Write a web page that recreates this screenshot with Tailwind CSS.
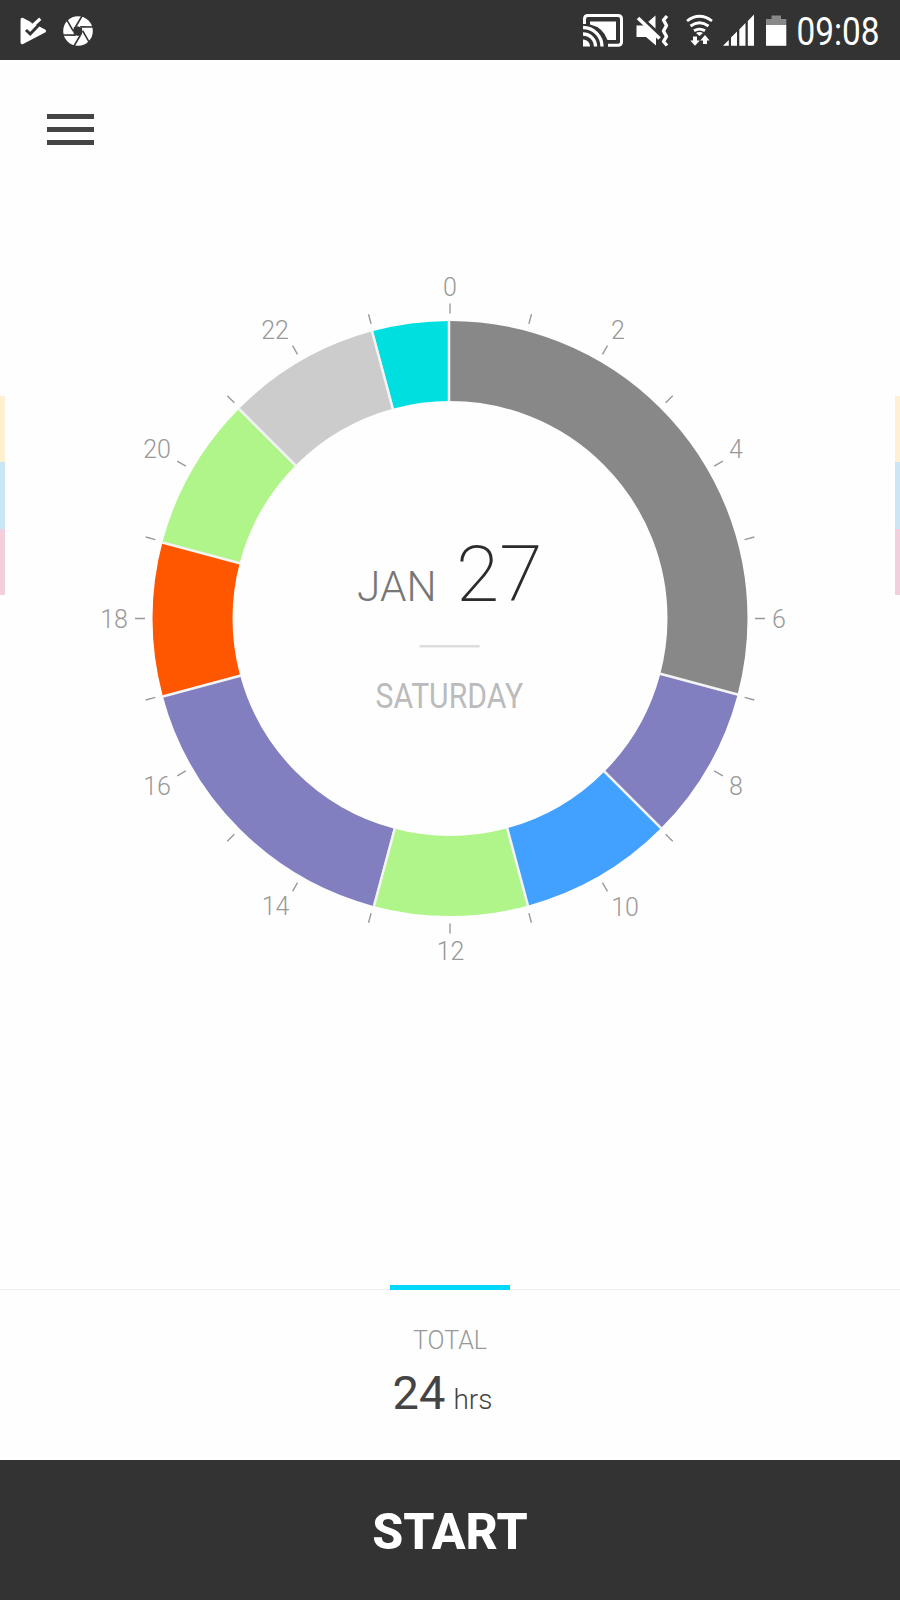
<!DOCTYPE html>
<html lang="en">
<head>
  <meta charset="UTF-8">
  <meta name="viewport" content="width=device-width, initial-scale=1.0">
  <title>Day Clock</title>
  <script src="https://cdn.jsdelivr.net/npm/@tailwindcss/browser@4"></script>
</head>
<body class="bg-[#fefefe] font-[Roboto,sans-serif]">
  <div class="w-[900px] h-[1600px] flex flex-col overflow-hidden">
    <!-- status bar -->
    <header class="h-[60px] shrink-0 bg-[#333333] text-white flex items-center justify-between pl-[19px] pr-[17px]">
      <div class="flex items-center gap-4 pt-px">
        <svg class="w-7 h-[30px]" viewBox="0 0 28 30">
          <path d="M3.300 3.500L25.300 15L3.300 26.500Z" fill="white" stroke="white" stroke-width="3.500" stroke-linejoin="round"/>
          <path d="M11 6L14.500 8.500L20.500 2L28 6V13L20 8.500Z" fill="#333333"/>
          <path d="M7 14L11.200 18L20 8.800" fill="none" stroke="#333333" stroke-width="3"/>
          <path d="M12.500 10.800L21.300 2.800" fill="none" stroke="white" stroke-width="3.200"/>
        </svg>
        <svg class="w-[30px] h-[30px]" viewBox="-15 -15 30 30">
          <circle r="14.800" fill="white"/>
          <path d="M-4 -4L0 -4.800L4 -3L4.500 1L3.500 4L0 5L-4 3.500L-5 0Z" fill="#333333"/>
          <g stroke="#333333" stroke-width="1.600">
            <path d="M-2.500 -4L4 -15"/>
            <path d="M-2.500 -4L4 -15" transform="rotate(60)"/>
            <path d="M-2.500 -4L4 -15" transform="rotate(120)"/>
            <path d="M-2.500 -4L4 -15" transform="rotate(180)"/>
            <path d="M-2.500 -4L4 -15" transform="rotate(240)"/>
            <path d="M-2.500 -4L4 -15" transform="rotate(300)"/>
          </g>
        </svg>
      </div>
      <div class="flex items-center">
        <svg class="w-[210px] h-[60px]" viewBox="580 0 210 60" fill="none">
          <!-- cast -->
          <path d="M584.500 24V19Q584.500 15.500 588 15.500H618Q621.500 15.500 621.500 19V42Q621.500 45.300 618 45.300H608" stroke="white" stroke-width="3"/>
          <path d="M590 21.500H616V40H607.500A24 24 0 0 0 590 24.500Z" fill="white"/>
          <path d="M583 27.500A19 19 0 0 1 602 46.500M583 34A12.500 12.500 0 0 1 595.500 46.500" stroke="white" stroke-width="3.300"/>
          <path d="M583 39.500A7 7 0 0 1 590 46.500H583Z" fill="white"/>
          <!-- muted, vibrating -->
          <path d="M636.500 25.500H645L656 35V45.500L646 37H636.500Z" fill="white"/>
          <path d="M648 22L655.500 15.500V29Z" fill="white"/>
          <path d="M639.500 15.800L662 36.500" stroke="#333333" stroke-width="3"/>
          <path d="M638 18L659.500 38.500" stroke="white" stroke-width="3.600"/>
          <path d="M667 16L663.500 20L666.500 25.500L663.500 31L666.500 36.500L663.500 41.500L667 45.500" stroke="white" stroke-width="3.400" stroke-linejoin="round"/>
          <!-- wifi with traffic arrows -->
          <path d="M687 21Q699.500 11.500 712 21M690.500 26Q699.500 19.500 708.500 26M694 30.800Q699.500 27.300 705 30.800" stroke="white" stroke-width="2.800"/>
          <path d="M696 33L699.500 36L703 33Q699.500 30.800 696 33Z" fill="white"/>
          <path d="M693 36.500H697V40.500H699.800L695 45.800L690.300 40.500H693ZM703 44V40.500H700.300L705 35L709.500 40.500H707V44Z" fill="white"/>
          <!-- signal -->
          <path d="M723 45.800L728.800 40V45.800ZM731 45.800V37.500L737 31.500V45.800ZM739.300 45.800V29.500L745.500 23V45.800ZM747.800 45.800V21L754 14.500V45.800Z" fill="white"/>
          <!-- battery -->
          <path d="M766 25V19H771.500V15.500H781V19H786.300V25Z" fill="#888888"/>
          <path d="M766 25H786.300V45.800H766Z" fill="white"/>
        </svg>
        <svg class="w-[93px] h-[60px] overflow-visible" viewBox="790 0 93 60">
          <text x="796.500" y="45.200" textLength="83" lengthAdjust="spacingAndGlyphs" fill="white" class="text-[38px]">09:08</text>
        </svg>
      </div>
    </header>

    <main class="relative flex-1 flex flex-col">
      <button class="w-[47px] h-[31px] mt-[54px] ml-[46.5px] flex flex-col justify-between">
        <span class="block w-full h-[5px] bg-[#444444]"></span>
        <span class="block w-full h-[5px] bg-[#444444]"></span>
        <span class="block w-full h-[5px] bg-[#444444]"></span>
      </button>

      <!-- edges of the neighbouring days -->
      <div class="absolute left-0 top-[336px] w-[5px] h-[199px] flex flex-col">
        <div class="flex-1 bg-[#fff0d2]"></div>
        <div class="flex-1 bg-[#cbe6f4]"></div>
        <div class="flex-1 bg-[#f3cfdd]"></div>
      </div>
      <div class="absolute right-0 top-[336px] w-[5px] h-[199px] flex flex-col">
        <div class="flex-1 bg-[#fff0d2]"></div>
        <div class="flex-1 bg-[#cbe6f4]"></div>
        <div class="flex-1 bg-[#f3cfdd]"></div>
      </div>

      <!-- 24 hour dial, one path unit per hour -->
      <svg class="w-[900px] h-[740px] mt-[105px]" viewBox="0 250 900 740">
        <g fill="none" stroke-width="80" transform="rotate(-90 450 618.5)">
          <circle cx="450" cy="618.5" r="257.5" pathLength="24" stroke="#888888" stroke-dasharray="7 17"/>
          <circle cx="450" cy="618.5" r="257.5" pathLength="24" stroke="#817fbf" stroke-dasharray="2 22" stroke-dashoffset="-7"/>
          <circle cx="450" cy="618.5" r="257.5" pathLength="24" stroke="#42a0ff" stroke-dasharray="2 22" stroke-dashoffset="-9"/>
          <circle cx="450" cy="618.5" r="257.5" pathLength="24" stroke="#b0f58a" stroke-dasharray="2 22" stroke-dashoffset="-11"/>
          <circle cx="450" cy="618.5" r="257.5" pathLength="24" stroke="#817fbf" stroke-dasharray="4 20" stroke-dashoffset="-13"/>
          <circle cx="450" cy="618.5" r="257.5" pathLength="24" stroke="#ff5600" stroke-dasharray="2 22" stroke-dashoffset="-17"/>
          <circle cx="450" cy="618.5" r="257.5" pathLength="24" stroke="#b0f58a" stroke-dasharray="2 22" stroke-dashoffset="-19"/>
          <circle cx="450" cy="618.5" r="257.5" pathLength="24" stroke="#cccccc" stroke-dasharray="2 22" stroke-dashoffset="-21"/>
          <circle cx="450" cy="618.5" r="257.5" pathLength="24" stroke="#00dfdf" stroke-dasharray="1 23" stroke-dashoffset="-23"/>
          <circle cx="450" cy="618.5" r="310" pathLength="2400" stroke="#999999" stroke-width="10" stroke-dasharray="1.7 98.3" stroke-dashoffset="0.85"/>
        </g>
        <g stroke="#f4f4f4" stroke-width="2.5">
          <path d="M449 320V402"/>
          <path d="M449 320V402" transform="rotate(105 450 618.5)"/>
          <path d="M449 320V402" transform="rotate(135 450 618.5)"/>
          <path d="M449 320V402" transform="rotate(165 450 618.5)"/>
          <path d="M449 320V402" transform="rotate(195 450 618.5)"/>
          <path d="M449 320V402" transform="rotate(255 450 618.5)"/>
          <path d="M449 320V402" transform="rotate(285 450 618.5)"/>
          <path d="M449 320V402" transform="rotate(315 450 618.5)"/>
          <path d="M449 320V402" transform="rotate(345 450 618.5)"/>
        </g>
        <g text-anchor="middle" fill="#999999" class="text-[25px] font-light">
          <text x="450" y="296">0</text>
          <text x="618" y="339">2</text>
          <text x="736" y="457.5">4</text>
          <text x="779" y="628">6</text>
          <text x="736" y="794.5">8</text>
          <text x="625" y="915.5">10</text>
          <text x="450.5" y="959.5">12</text>
          <text x="275.5" y="915">14</text>
          <text x="157" y="794.5">16</text>
          <text x="114" y="628">18</text>
          <text x="157" y="457.5">20</text>
          <text x="275" y="339">22</text>
        </g>
        <text x="357" y="601" textLength="79.500" lengthAdjust="spacingAndGlyphs" fill="#777777" class="text-[42px] font-light">JAN</text>
        <text x="456" y="601" textLength="86.500" lengthAdjust="spacingAndGlyphs" fill="#2b2b2b" class="text-[77px] font-extralight">27</text>
        <path d="M419.500 646.200H479.500" stroke="#dddddd" stroke-width="2.500"/>
        <text x="375.500" y="707.500" textLength="147.500" lengthAdjust="spacingAndGlyphs" fill="#bbbbbb" class="text-[35px]">SATURDAY</text>
      </svg>
    </main>

    <section class="relative h-[171px] shrink-0 border-t border-[#eeeeee] flex flex-col items-center">
      <div class="absolute left-[390px] -top-[5px] w-[120px] h-[5px] bg-[#00d8ff]"></div>
      <p class="mt-[36px] text-[25px] leading-[30px] font-light text-[#999999]">TOTAL</p>
      <p class="mt-[9px] flex items-baseline gap-2 text-[#444444] mr-[15px]">
        <span class="text-[47px] leading-[56px]">24</span>
        <span class="text-[28px] font-light">hrs</span>
      </p>
    </section>
    <button class="h-[140px] shrink-0 bg-[#333333] text-white text-[50px] font-extrabold pt-1">START</button>
  </div>
</body>
</html>
